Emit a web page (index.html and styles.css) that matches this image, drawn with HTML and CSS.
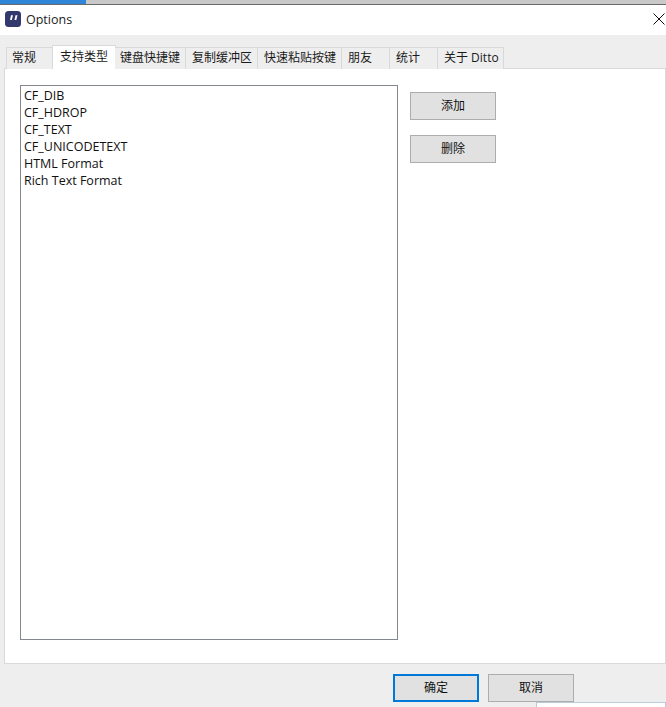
FILE: index.html
```html
<!DOCTYPE html>
<html lang="zh">
<head>
<meta charset="utf-8">
<title>Options</title>
<link rel="stylesheet" href="styles.css">
</head>
<body>
<div class="topstrip"><div class="progress"></div></div>
<header class="titlebar">
  <svg class="appicon" width="16" height="16" viewBox="0 0 16 16"><rect width="16" height="16" rx="3.500" fill="#33386e"/><path d="M6 4.200h2L6.800 9H5zM10.500 4.200h2L11.300 9H9.500z" fill="#fff"/></svg>
  <span class="title">Options</span>
  <svg class="close" width="12" height="12" viewBox="0 0 12 12"><path d="M.5.500l11 11M11.500.500l-11 11" stroke="#111" stroke-width="1" fill="none"/></svg>
</header>
<main class="dialog">
  <nav class="tabs">
    <span class="tab w1">常规</span>
    <span class="tab active">支持类型</span>
    <span class="tab w3">键盘快捷键</span>
    <span class="tab w4">复制缓冲区</span>
    <span class="tab w5">快速粘贴按键</span>
    <span class="tab w6">朋友</span>
    <span class="tab w6">统计</span>
    <span class="tab w7">关于 Ditto</span>
  </nav>
  <section class="panel">
    <ul class="list">
      <li>CF_DIB</li>
      <li>CF_HDROP</li>
      <li>CF_TEXT</li>
      <li>CF_UNICODETEXT</li>
      <li>HTML Format</li>
      <li>Rich Text Format</li>
    </ul>
    <div class="side">
      <button class="btn">添加</button>
      <button class="btn">删除</button>
    </div>
  </section>
  <footer class="footer">
    <button class="btn primary">确定</button>
    <button class="btn">取消</button>
  </footer>
  <div class="peek"></div>
</main>
</body>
</html>
```
FILE: styles.css
```css
html, body { margin: 0; padding: 0; }
body {
  width: 666px; height: 707px; overflow: hidden; background: #eeeeee; color: #111;
  font-family: "Open Sans", "Noto Sans CJK SC", sans-serif; font-size: 12px;
  display: flex; flex-direction: column;
}
.topstrip { height: 4px; background: #c9c9c9; border-bottom: 1px solid #6a6a6a; flex: none; }
.progress { width: 86px; height: 4px; background: #2f86d8; }
.titlebar { height: 30px; background: #fff; display: flex; align-items: center; padding: 0 1px 0 5px; flex: none; }
.appicon { flex: none; margin-top: -2px; }
.title { margin-left: 5px; font-size: 12.500px; color: #222; margin-top: -2px; }
.close { margin-left: auto; margin-top: -2px; }
.dialog { flex: 1; position: relative; display: flex; flex-direction: column; padding: 11px 0 0 4px; overflow: hidden; }
.tabs { display: flex; height: 23px; padding-left: 2px; position: relative; z-index: 1; }
.tab {
  box-sizing: border-box; height: 22px; margin-top: 1px; background: #eeeeee;
  border: 1px solid #d9d9d9; border-bottom: 0; border-right-width: 0; padding-left: 5px; white-space: nowrap; line-height: 19px; color: #1a1a1a;
}
.w1 { width: 46px; padding-left: 5px; }
.active { width: 64px; height: 24px; margin-top: -1px; background: #fff; padding-left: 7px; border-right-width: 1px; line-height: 21px; }
.w3 { width: 70px; border-left: 0; padding-left: 4px; }
.w4 { width: 72px; padding-left: 6px; }
.w5 { width: 84px; padding-left: 6px; }
.w6 { width: 48px; padding-left: 6px; }
.w7 { width: 67px; padding-left: 6px; border-right-width: 1px; }
.tabs .w3 { margin-left: -1px; padding-left: 5px; }
.panel {
  box-sizing: border-box; height: 596px; width: 662px; background: #fff; border: 1px solid #d9d9d9;
  padding: 16px 0 0 15px; display: flex; gap: 12px; margin-top: -1px; flex: none;
}
.list {
  box-sizing: border-box; width: 378px; height: 555px; border: 1px solid #828790; margin: 0; padding: 1px 0 0 3px; list-style: none; flex: none;
}
.list li { height: 17px; line-height: 17px; color: #111; font-size: 12.500px; }
.side { display: flex; flex-direction: column; gap: 15px; padding-top: 7px; }
.btn {
  box-sizing: border-box; width: 86px; height: 28px; background: #e1e1e1; border: 1px solid #adadad; padding: 0 0 2px;
  font: inherit; color: #111;
}
.footer { display: flex; gap: 9px; padding: 10px 0 0 389px; }
.primary { border: 2px solid #0078d7; }
.peek { position: absolute; left: 536px; top: 667px; width: 130px; height: 10px; background: #fff; border: 1px solid #bccbdc; box-sizing: border-box; }
```
